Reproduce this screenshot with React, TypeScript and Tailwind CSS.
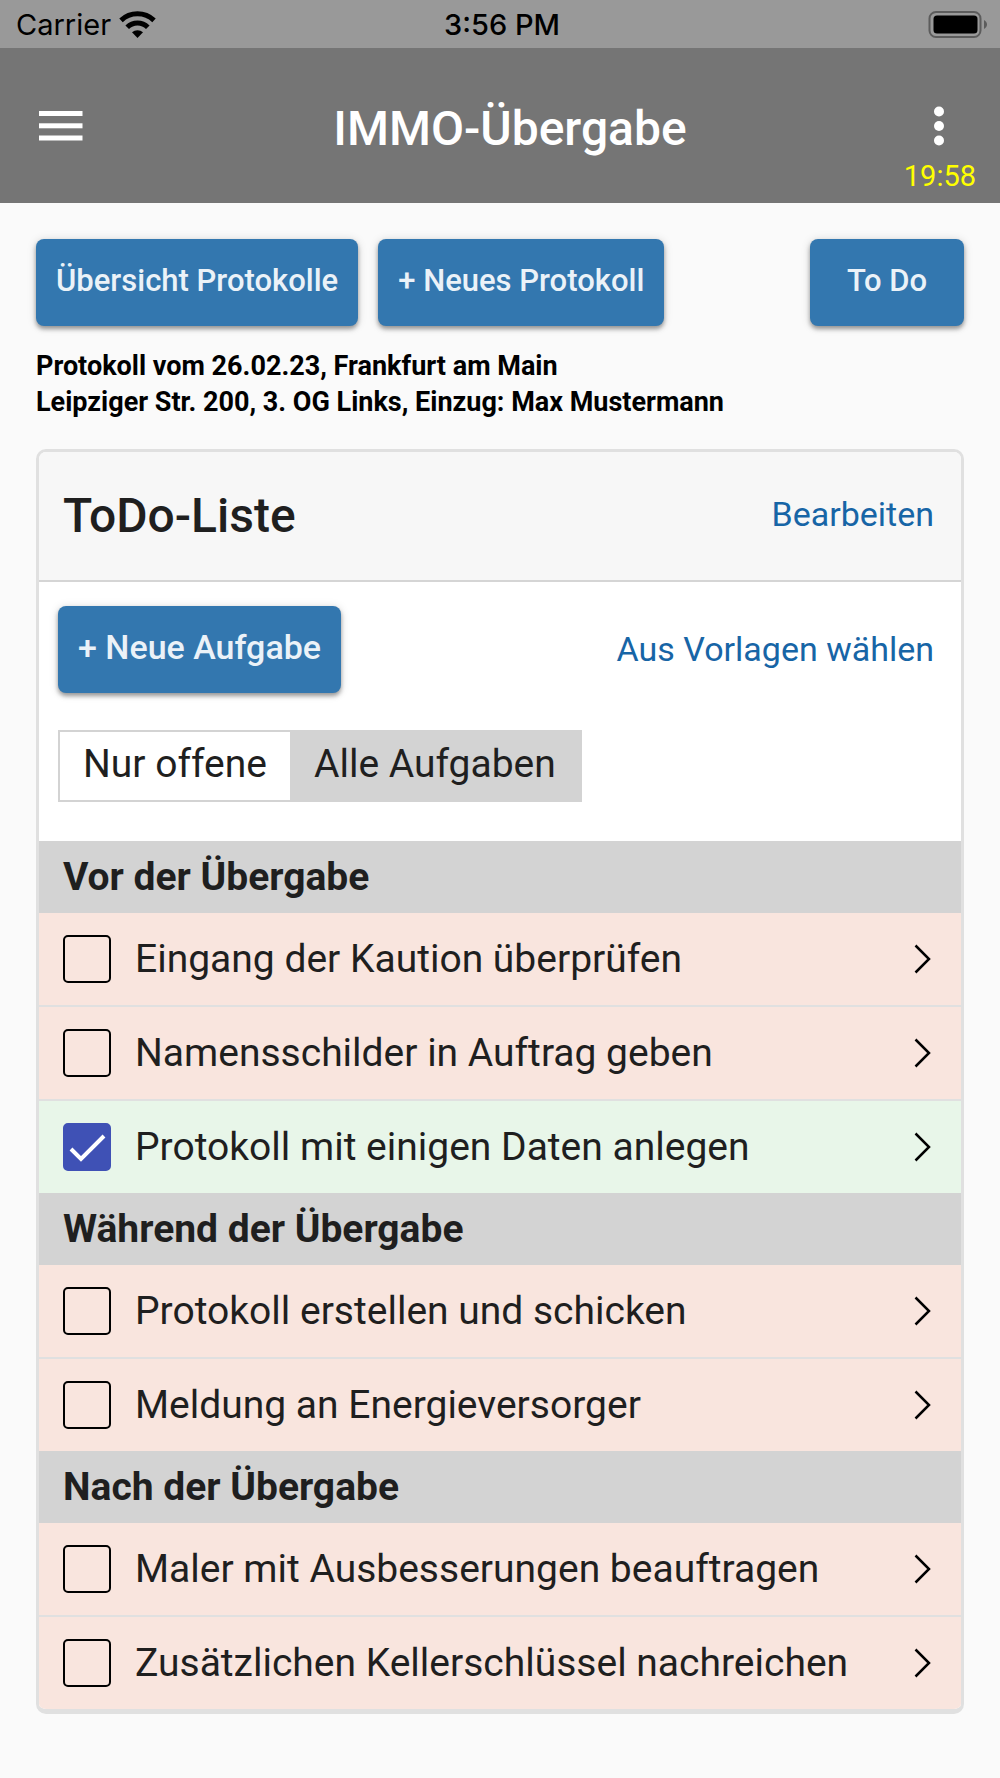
import React, { useState } from 'react';

interface Task {
  id: number;
  title: string;
  done: boolean;
}

interface TaskGroup {
  title: string;
  tasks: Task[];
}

const initialGroups: TaskGroup[] = [
  {
    title: 'Vor der Übergabe',
    tasks: [
      { id: 1, title: 'Eingang der Kaution überprüfen', done: false },
      { id: 2, title: 'Namensschilder in Auftrag geben', done: false },
      { id: 3, title: 'Protokoll mit einigen Daten anlegen', done: true },
    ],
  },
  {
    title: 'Während der Übergabe',
    tasks: [
      { id: 4, title: 'Protokoll erstellen und schicken', done: false },
      { id: 5, title: 'Meldung an Energieversorger', done: false },
    ],
  },
  {
    title: 'Nach der Übergabe',
    tasks: [
      { id: 6, title: 'Maler mit Ausbesserungen beauftragen', done: false },
      { id: 7, title: 'Zusätzlichen Kellerschlüssel nachreichen', done: false },
    ],
  },
];

const StatusBar = () => (
  <div className="grid h-12 grid-cols-3 items-center bg-[#999999] pl-4 pr-3 pt-0.5 font-['Inter',sans-serif] text-[29px] leading-8 text-black">
    <div className="flex items-center gap-2">
      <span>Carrier</span>
      <svg width="37" height="28" viewBox="0 0 37 28" aria-hidden="true">
        <path d="M18.5 27 L13 21.3 A8.4 8.4 0 0 1 24 21.3 Z" />
        <path d="M8.2 16.3 A14.4 14.4 0 0 1 28.8 16.3" fill="none" stroke="currentColor" strokeWidth="5" />
        <path d="M2 9.4 A24 24 0 0 1 35 9.4" fill="none" stroke="currentColor" strokeWidth="5" />
      </svg>
    </div>
    <span className="text-center font-medium">3:56 PM</span>
    <svg className="justify-self-end" width="60" height="28" viewBox="0 0 60 28" aria-hidden="true">
      <rect x="1.5" y="1" width="51" height="25" rx="6.5" fill="none" stroke="#5c5c5c" strokeWidth="2" />
      <rect x="5.5" y="4.5" width="44" height="18" rx="3.5" />
      <path d="M56 9 C60 11 60 16 56 18 Z" fill="#5c5c5c" />
    </svg>
  </div>
);

const Header = () => (
  <header className="bg-[#757575] pb-[9px] pt-[45px] text-white">
    <div className="flex h-[66px] items-center">
      <button type="button" aria-label="Menü" className="flex h-full w-[122px] items-center justify-center">
        <svg width="44" height="30" viewBox="0 0 44 30" fill="currentColor">
          <rect width="43.5" height="5" />
          <rect y="12.3" width="43.5" height="5" />
          <rect y="24.5" width="43.5" height="5" />
        </svg>
      </button>
      <h1 className="flex-1 pt-1.5 text-center text-[48px] font-medium leading-[56px]">IMMO-Übergabe</h1>
      <button type="button" aria-label="Mehr" className="mr-5 flex h-full w-[82px] items-center justify-center">
        <svg width="10" height="40" viewBox="0 0 10 40" fill="currentColor">
          <circle cx="5" cy="5.5" r="5" />
          <circle cx="5" cy="20" r="5" />
          <circle cx="5" cy="34.5" r="5" />
        </svg>
      </button>
    </div>
    <p className="pr-6 text-right text-[29px] leading-[35px] text-[#ffff00]">19:58</p>
  </header>
);

interface ButtonProps {
  children: React.ReactNode;
  className?: string;
}

const Button = ({ children, className = '' }: ButtonProps) => (
  <button
    type="button"
    className={`h-[87px] rounded-lg bg-[#3377af] font-medium text-[#ebf2f8] shadow-[0_3px_4px_rgba(0,0,0,0.35),0_1px_10px_rgba(0,0,0,0.15)] ${className}`}
  >
    {children}
  </button>
);

interface TaskRowProps {
  task: Task;
  onToggle: (id: number) => void;
}

const TaskRow = ({ task, onToggle }: TaskRowProps) => (
  <li className={`flex h-[92px] items-center box-content ${task.done ? 'bg-[#e8f6e9]' : 'bg-[#f9e5de]'}`}>
    <label className="flex h-full flex-1 items-center gap-6 pl-6">
      <span className="relative flex">
        <input
          type="checkbox"
          checked={task.done}
          onChange={() => onToggle(task.id)}
          className="size-12 appearance-none rounded-[5px] border-2 border-black checked:border-[#3f51b5] checked:bg-[#3f51b5]"
        />
        {task.done && (
          <svg className="pointer-events-none absolute inset-0" width="48" height="48" viewBox="0 0 48 48" fill="none">
            <path d="M8 26 L18 36 L41 13" stroke="#ffffff" strokeWidth="4" />
          </svg>
        )}
      </span>
      <span>{task.title}</span>
    </label>
    <button type="button" aria-label={`${task.title} öffnen`} className="flex h-full items-center pl-6 pr-[30px]">
      <svg width="17" height="30" viewBox="0 0 17 30" fill="none">
        <path d="M1.5 1.5 L15 15 L1.5 28.5" stroke="#000000" strokeWidth="2.5" />
      </svg>
    </button>
  </li>
);

export default function App() {
  const [groups, setGroups] = useState(initialGroups);
  const [onlyOpen, setOnlyOpen] = useState(false);

  const toggleTask = (id: number) => {
    setGroups(prev =>
      prev.map(g => ({
        ...g,
        tasks: g.tasks.map(t => (t.id === id ? { ...t, done: !t.done } : t)),
      }))
    );
  };

  return (
    <div className="min-h-screen bg-[#fafafa] font-['Roboto',sans-serif] text-[#1f1f1f]">
      <StatusBar />
      <Header />

      <main className="px-9 pb-15 pt-9">
        <div className="flex gap-5">
          <Button className="px-5 pb-0.5 text-[31px]">Übersicht Protokolle</Button>
          <Button className="px-5 pb-0.5 text-[31px]">+ Neues Protokoll</Button>
          <Button className="ml-auto px-[37px] pb-0.5 text-[31px]">To Do</Button>
        </div>

        <p className="mt-[22px] text-[27px] font-bold leading-9 text-black">
          Protokoll vom 26.02.23, Frankfurt am Main
          <br />
          Leipziger Str. 200, 3. OG Links, Einzug: Max Mustermann
        </p>

        <section className="mt-[29px] overflow-hidden rounded-[10px] border-[3px] border-b-[5px] border-[#e0e0e0] bg-white text-[39px]">
          <div className="flex h-[130px] items-center justify-between border-b-2 border-[#d5d5d5] bg-[#f7f7f7] pl-6 pr-[27px]">
            <h2 className="text-[48px] font-medium">ToDo-Liste</h2>
            <a href="#bearbeiten" className="pb-1 text-[34px] text-[#1765a6]">Bearbeiten</a>
          </div>

          <div className="px-[19px] pb-[39px] pt-6">
            <div className="flex items-center justify-between pr-2">
              <Button className="px-5 pb-1 text-[34px]">+ Neue Aufgabe</Button>
              <a href="#vorlagen" className="text-[34px] text-[#1765a6]">Aus Vorlagen wählen</a>
            </div>

            <div className="mt-[37px] inline-flex h-[72px] border-2 border-[#d3d3d3] align-top">
              <button
                type="button"
                aria-pressed={onlyOpen}
                onClick={() => setOnlyOpen(true)}
                className={`px-[23px] pb-1 ${onlyOpen ? 'bg-[#d3d3d3]' : 'bg-white'}`}
              >
                Nur offene
              </button>
              <button
                type="button"
                aria-pressed={!onlyOpen}
                onClick={() => setOnlyOpen(false)}
                className={`px-6 pb-1 ${onlyOpen ? 'bg-white' : 'bg-[#d3d3d3]'}`}
              >
                Alle Aufgaben
              </button>
            </div>
          </div>

          {groups.map(group => (
            <div key={group.title}>
              <h3 className="flex h-[72px] items-center bg-[#d3d3d3] pl-6 font-bold">{group.title}</h3>
              <ul className="divide-y-2 divide-[#e0e0e0]">
                {group.tasks
                  .filter(t => !onlyOpen || !t.done)
                  .map(t => (
                    <TaskRow key={t.id} task={t} onToggle={toggleTask} />
                  ))}
              </ul>
            </div>
          ))}
        </section>
      </main>
    </div>
  );
}
